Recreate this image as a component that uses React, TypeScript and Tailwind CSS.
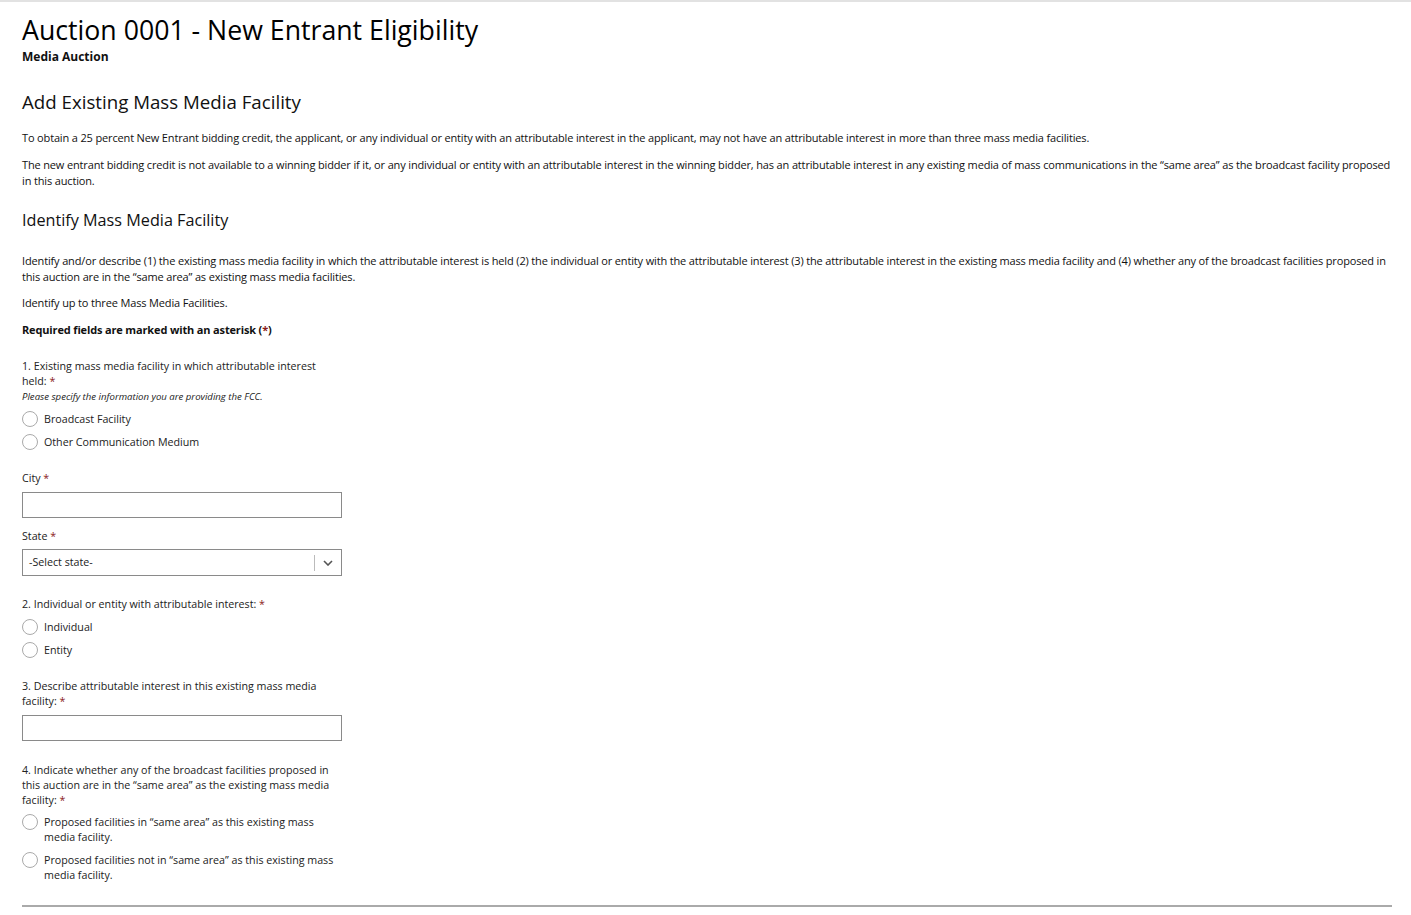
import React from "react";

const font = { fontFamily: '"Open Sans", "Liberation Sans", sans-serif' };

const Req: React.FC = () => <span className="text-[#8b1a1a]"> *</span>;

const Radio: React.FC<{ label: React.ReactNode; name: string }> = ({ label, name }) => (
  <label className="flex items-start gap-[6px] text-[10.7px] leading-[15px] text-[#222]">
    <input
      type="radio"
      name={name}
      className="appearance-none mt-[0px] w-[16px] h-[16px] shrink-0 rounded-full border border-[#aaa] bg-white"
    />
    <span className="pt-[1px]">{label}</span>
  </label>
);

const App: React.FC = () => {
  return (
    <div className="min-h-[915px] bg-white border-t-2 border-[#e2e2e2] text-[#111]" style={font}>
      <div className="pl-[22px] pr-[19px]">
        <h1 className="text-[26.7px] leading-[34px] pt-[11px] text-black">Auction 0001 - New Entrant Eligibility</h1>
        <div className="text-[12px] font-bold leading-[15px] mt-[2px]">Media Auction</div>

        <h2 className="text-[18.7px] leading-[24px] mt-[26px]">Add Existing Mass Media Facility</h2>
        <p className="text-[11px] leading-[16px] mt-[16px] tracking-[-0.15px]">
          To obtain a 25 percent New Entrant bidding credit, the applicant, or any individual or entity with an attributable interest in the applicant, may not have an attributable interest in more than three mass media facilities.
        </p>
        <p className="text-[11px] leading-[16px] mt-[11px] tracking-[-0.15px]">
          The new entrant bidding credit is not available to a winning bidder if it, or any individual or entity with an attributable interest in the winning bidder, has an attributable interest in any existing media of mass communications in the “same area” as the broadcast facility proposed in this auction.
        </p>

        <h2 className="text-[16.2px] leading-[22px] mt-[20px]">Identify Mass Media Facility</h2>
        <p className="text-[11px] leading-[16px] mt-[22px] tracking-[-0.15px]">
          Identify and/or describe (1) the existing mass media facility in which the attributable interest is held (2) the individual or entity with the attributable interest (3) the attributable interest in the existing mass media facility and (4) whether any of the broadcast facilities proposed in this auction are in the “same area” as existing mass media facilities.
        </p>
        <p className="text-[11px] leading-[16px] mt-[10px] tracking-[-0.15px]">Identify up to three Mass Media Facilities.</p>
        <p className="text-[11px] leading-[16px] mt-[11px] font-bold tracking-[-0.15px]">
          Required fields are marked with an asterisk (<span className="text-[#8b1a1a]">*</span>)
        </p>

        <form className="w-[320px] mt-[21px] text-[#222]">
          <div className="text-[10.7px] leading-[15px]">
            1. Existing mass media facility in which attributable interest held:<Req />
          </div>
          <div className="text-[9.6px] italic leading-[15px]">Please specify the information you are providing the FCC.</div>
          <div className="flex flex-col gap-[7px] mt-[7px]">
            <Radio name="q1" label="Broadcast Facility" />
            <Radio name="q1" label="Other Communication Medium" />
          </div>

          <div className="text-[10.7px] leading-[15px] mt-[21px]">
            City<Req />
          </div>
          <input type="text" className="block w-[320px] h-[26px] mt-[6px] border border-[#8a8a8a] bg-white" />

          <div className="text-[10.7px] leading-[15px] mt-[11px]">
            State<Req />
          </div>
          <div className="flex items-center w-[320px] h-[27px] mt-[5px] border border-[#8a8a8a] bg-white">
            <span className="flex-1 text-[10.7px] pl-[6px]">-Select state-</span>
            <span className="w-px h-[16px] bg-[#bbb]" />
            <span className="w-[26px] flex justify-center">
              <svg width="10" height="6" viewBox="0 0 10 6" fill="none">
                <path d="M1 1l4 4 4-4" stroke="#555" strokeWidth="1.6" />
              </svg>
            </span>
          </div>

          <div className="text-[10.7px] leading-[15px] mt-[21px]">
            2. Individual or entity with attributable interest:<Req />
          </div>
          <div className="flex flex-col gap-[7px] mt-[7px]">
            <Radio name="q2" label="Individual" />
            <Radio name="q2" label="Entity" />
          </div>

          <div className="text-[10.7px] leading-[15px] mt-[21px]">
            3. Describe attributable interest in this existing mass media facility:<Req />
          </div>
          <input type="text" className="block w-[320px] h-[26px] mt-[6px] border border-[#8a8a8a] bg-white" />

          <div className="text-[10.7px] leading-[15px] mt-[22px]">
            4. Indicate whether any of the broadcast facilities proposed in this auction are in the “same area” as the existing mass media facility:<Req />
          </div>
          <div className="flex flex-col gap-[7px] mt-[6px]">
            <Radio name="q4" label="Proposed facilities in “same area” as this existing mass media facility." />
            <Radio name="q4" label="Proposed facilities not in “same area” as this existing mass media facility." />
          </div>
        </form>

        <hr className="mt-[22px] border-0 h-[2px] bg-[#aaa]" />
      </div>
    </div>
  );
};

export default App;
